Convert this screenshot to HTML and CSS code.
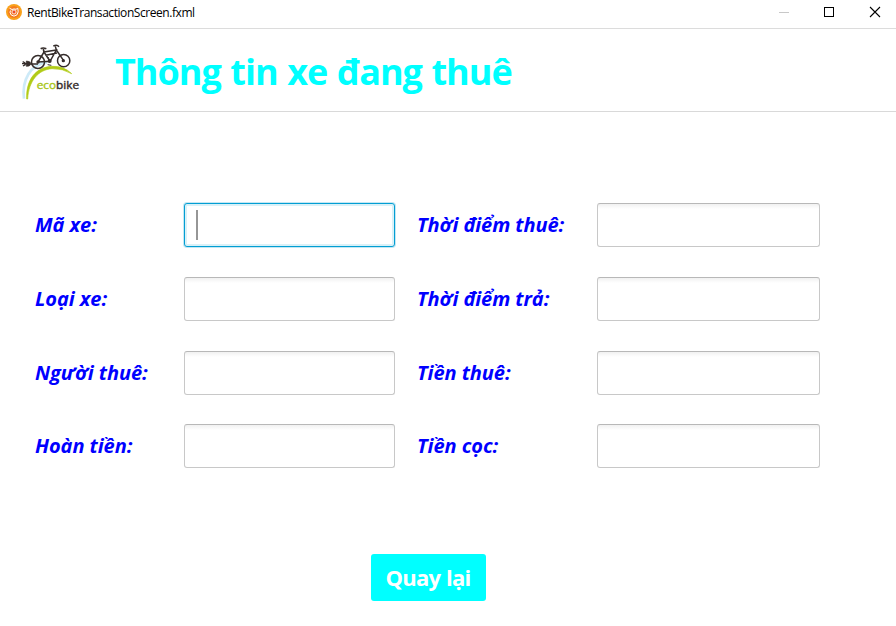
FILE: index.html
```html
<!DOCTYPE html>
<html lang="vi">
<head>
<meta charset="utf-8">
<title>RentBikeTransactionScreen.fxml</title>
<link rel="stylesheet" href="styles.css">
</head>
<body>
<div class="titlebar">
  <svg class="app-icon" width="16" height="16" viewBox="0 0 16 16"><circle cx="8" cy="8" r="8" fill="#f9a11b"/><circle cx="8" cy="8" r="6" fill="#f47b20"/><path d="M3.5 4.2 6 5.5Q8 4.5 10 5.3L11.8 4.2Q13 8 11 10.8Q8 13.5 5 10.8Q3.3 8 4.5 6.5" fill="none" stroke="#fff" stroke-width="1"/><circle cx="8" cy="8" r="2" fill="#ef4b23" stroke="#fff" stroke-width=".8"/></svg>
  <span class="caption">RentBikeTransactionScreen.fxml</span>
  <svg class="controls" width="136" height="28" viewBox="0 0 136 28" shape-rendering="crispEdges" fill="none"><path d="M19 12.5h10" stroke="#c8c8c8"/><rect x="64.5" y="7.5" width="9" height="9" stroke="#000"/><path d="m110 7 10 10m0-10-10 10" stroke="#000" shape-rendering="auto" stroke-width="1.1"/></svg>
</div>
<header class="header">
  <svg class="logo" width="80" height="70" viewBox="0 0 240 210" fill="none">
    <path d="M27 191C20 135 46 88 96 82" stroke="#cdeaf8" stroke-width="8"/>
    <path d="M35 192C33 130 65 97 110 94Q146 92 170 116Q143 100 111 101C70 104 41 137 38 192Z" fill="#b1cb17" stroke="#b1cb17" stroke-width="2"/>
    <g stroke="#352d2b" stroke-width="4.5">
      <circle cx="69" cy="81" r="19.500"/><circle cx="146" cy="77" r="18.500"/>
      <path d="M69 81 87 51 124 45 105 79 87 51M69 81 105 79M92 61 126 54M124 45 146 77M124 45 121 34M115 33Q126 28 132 35" />
      <path d="M87 51 85 42M77 41Q84 37 94 41" stroke-width="5"/>
      <path d="M21 86H36M23 80 31 84M24 93 32 88M47 87H69" stroke-width="4"/>
      <path d="M34 78Q46 78 48 86Q45 95 34 94Z" fill="#352d2b" stroke-width="2"/>
      <circle cx="104" cy="78" r="6" fill="#352d2b" stroke="none"/><circle cx="145" cy="77" r="5" fill="#352d2b" stroke="none"/><circle cx="69" cy="81" r="5" fill="#352d2b" stroke="none"/>
      <path d="m98 89 11 2M102 70 98 65" stroke-width="3"/>
    </g>
    <text y="162" class="logo-text"><tspan x="65" fill="#a9c51a" stroke="#a9c51a" textLength="58" lengthAdjust="spacingAndGlyphs">eco</tspan><tspan x="123" fill="#352d2b" stroke="#352d2b" textLength="69" lengthAdjust="spacingAndGlyphs">bike</tspan></text>
  </svg>
  <h1>Thông tin xe đang thuê</h1>
</header>
<main>
  <form class="fields">
    <label>Mã xe:</label><div class="input focused"><i class="caret"></i></div>
    <label>Thời điểm thuê:</label><div class="input"></div>
    <label>Loại xe:</label><div class="input"></div>
    <label>Thời điểm trả:</label><div class="input"></div>
    <label>Người thuê:</label><div class="input"></div>
    <label>Tiền thuê:</label><div class="input"></div>
    <label>Hoàn tiền:</label><div class="input"></div>
    <label>Tiền cọc:</label><div class="input"></div>
  </form>
  <button class="back" type="button">Quay lại</button>
</main>
</body>
</html>
```

FILE: styles.css
```css
* { box-sizing: border-box; }
body { margin: 0; width: 896px; height: 626px; overflow: hidden; background: #fff; font-family: "Open Sans", "Noto Sans", sans-serif; }
.titlebar { display: flex; align-items: flex-start; height: 29px; border-bottom: 1px solid #dcdcdc; }
.app-icon { margin: 4px 5px 0 6px; }
.caption { font-size: 12px; line-height: 16px; margin-top: 5px; letter-spacing: -0.44px; color: #000; white-space: nowrap; }
.controls { margin-left: auto; }
.header { display: flex; height: 83px; border-bottom: 1px solid #d9d9d9; }
.logo { margin: 6px 0 0 15px; }
.logo-text { font: 400 33px "Open Sans", sans-serif; stroke-width: 1.2px; }
h1 { margin: 18px 0 0 20px; font-size: 36px; line-height: 50px; font-weight: 700; color: #0ff; white-space: nowrap; letter-spacing: -1px; word-spacing: 1.2px; }
main { display: flex; flex-direction: column; }
.fields { display: grid; grid-template-columns: 149px 211px 202px 223px; grid-template-rows: 44px 44px 43px 44px; row-gap: 30px; margin: 91px 0 0 35px; }
label { display: flex; align-items: center; height: 44px; font-size: 20px; line-height: 28px; font-weight: 700; font-style: italic; letter-spacing: -0.06px; color: #00f; white-space: nowrap; }
label:nth-child(4n + 3) { padding-left: 22px; }
.input { height: 44px; border: 1px solid #c8c8c8; border-top-color: #b8b8b8; border-radius: 3px; background: linear-gradient(#f1f1f1, #fff 5px); }
.focused { display: flex; align-items: center; padding-left: 11px; border-color: #039ed3; background: #fff; box-shadow: 0 0 0 1px #c4e7f3, inset 0 0 0 2px #d9f1f8; }
.caret { width: 2px; height: 30px; background: #969696; }
.back { width: 115px; height: 47px; margin: 86px 0 0 371px; padding: 0 1px 2px 0; border: 0; border-radius: 3px; background: #0ff; color: #fff; font: 700 22px "Open Sans", sans-serif; letter-spacing: -0.8px; word-spacing: 1px; white-space: nowrap; }
```
